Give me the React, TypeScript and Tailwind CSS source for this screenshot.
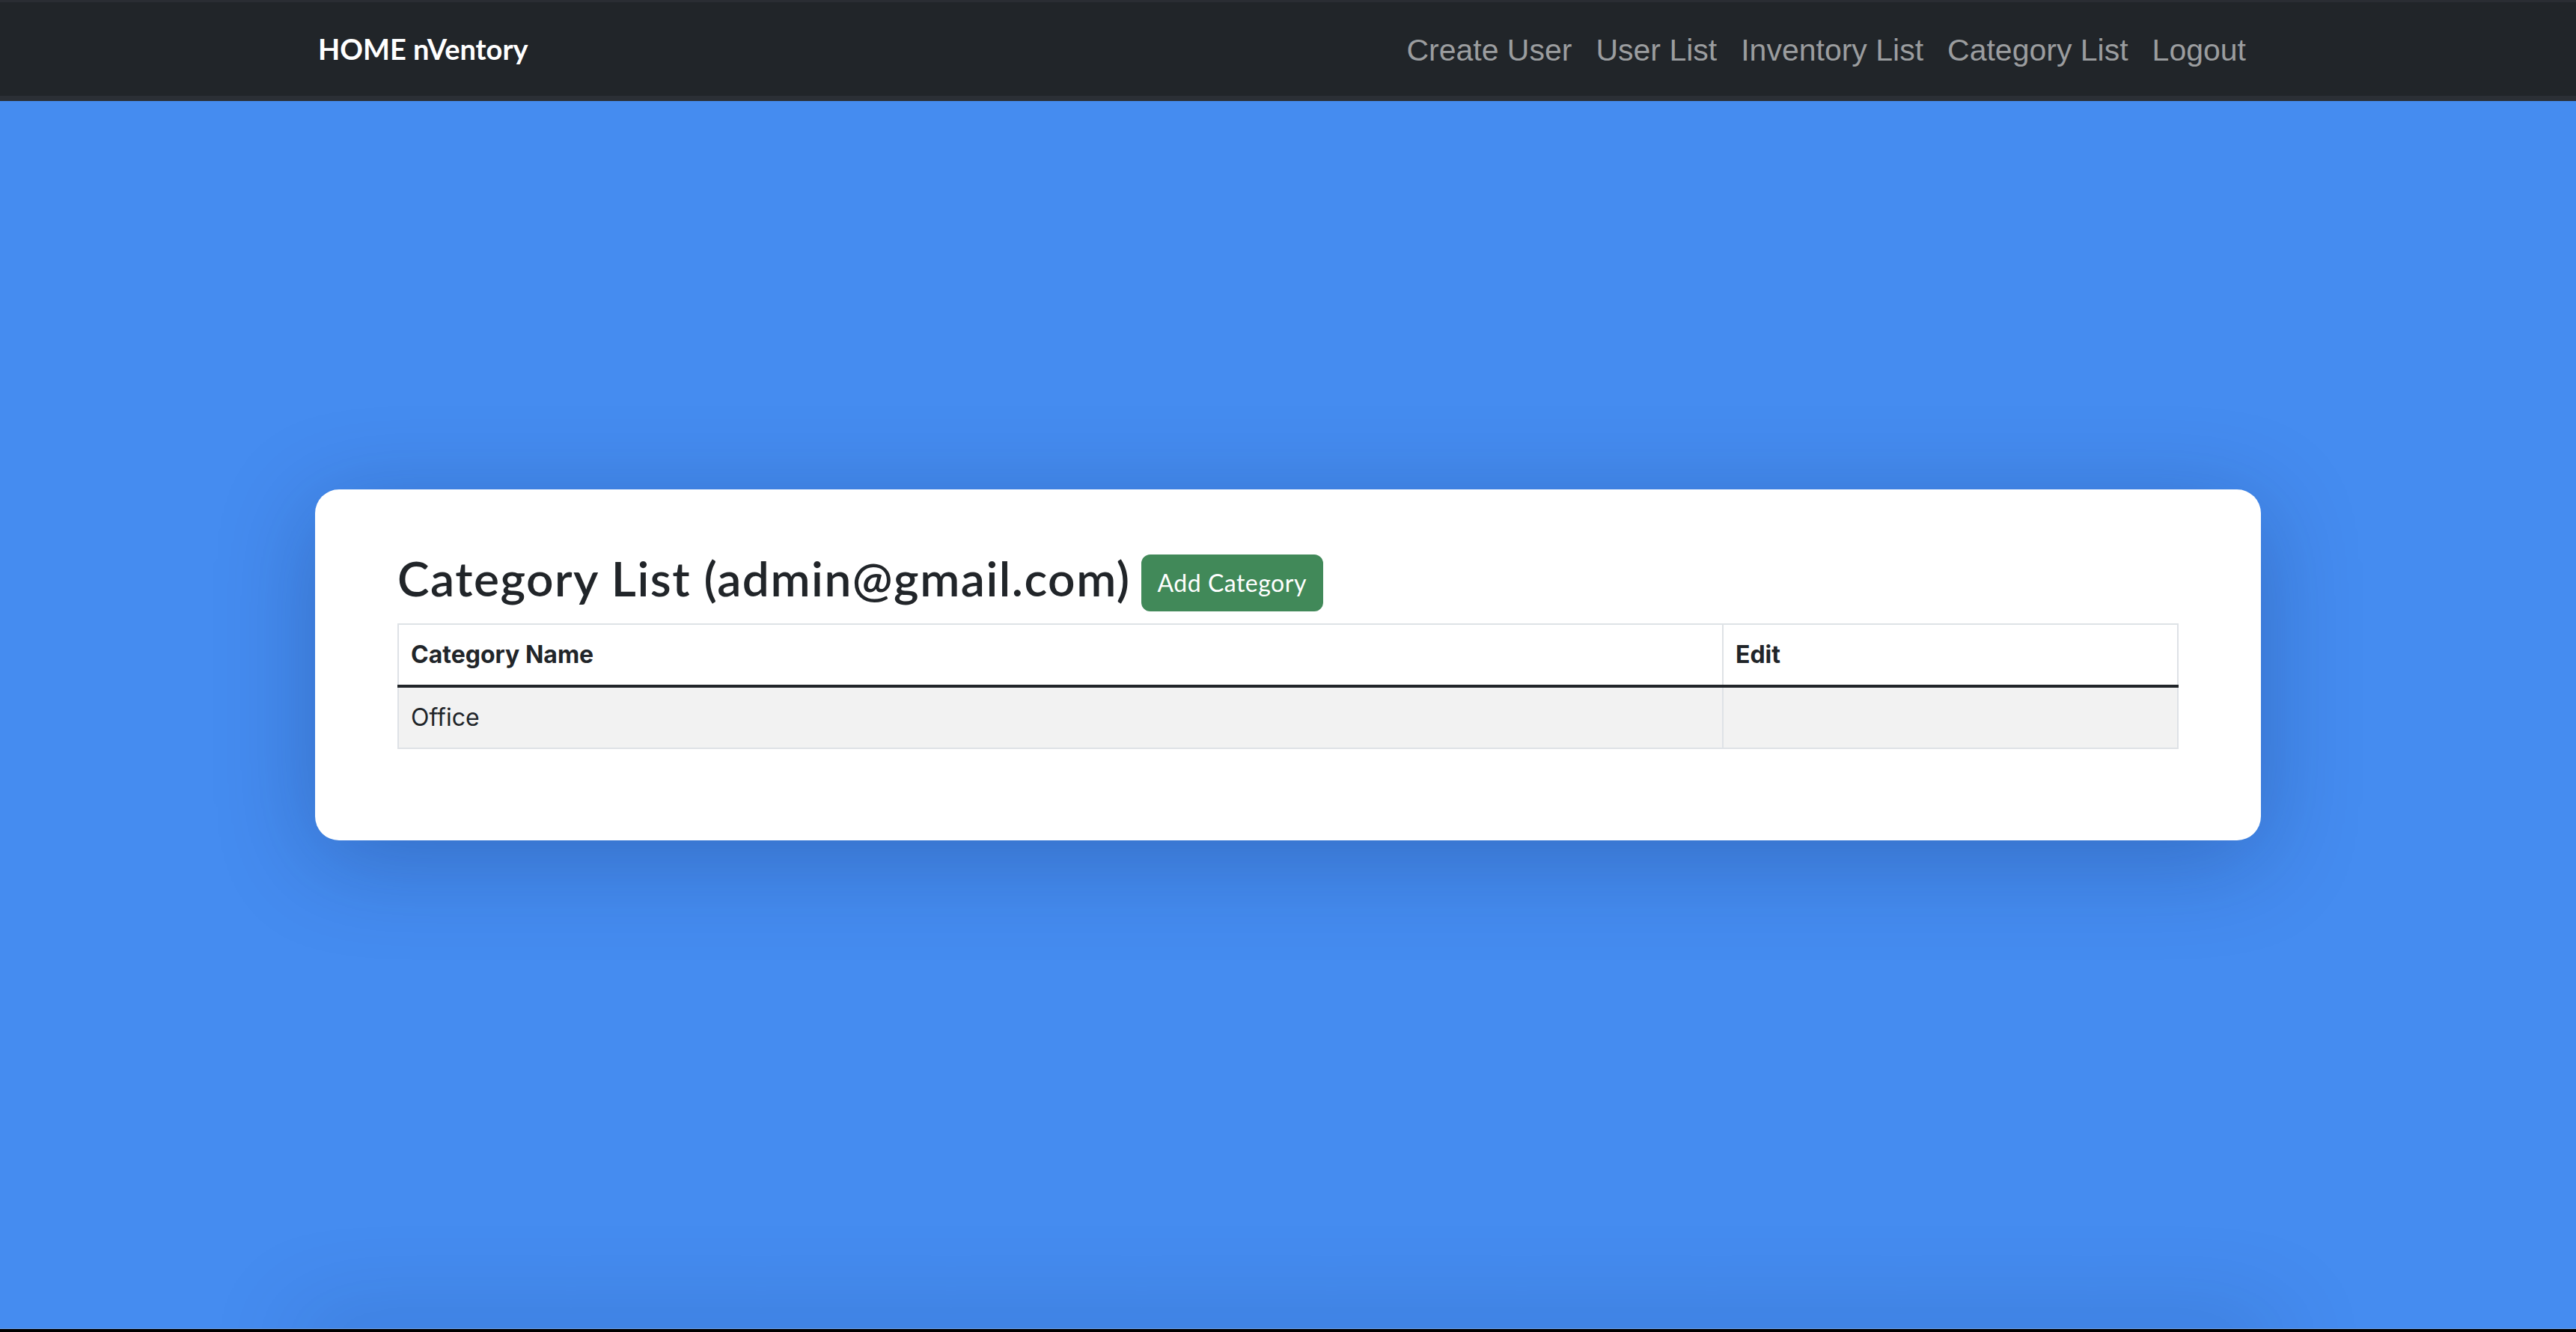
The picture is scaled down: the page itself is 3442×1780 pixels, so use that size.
import React from 'react'

const links = ['Create User', 'User List', 'Inventory List', 'Category List', 'Logout']

const rows = [{ name: 'Office' }]

export default function App() {
  return (
    <div className="h-[1780px] w-full overflow-hidden bg-black">
      {/* Navbar */}
      <nav className="h-[135px] border-t-[3px] border-b-[7px] border-t-[#2a2d33] border-b-[#2b2f35] bg-[#212529]">
        <div className="mx-auto flex h-full w-[2640px] items-center justify-between px-6">
          <a className="font-['Lato','Open_Sans',sans-serif] text-[38px] font-bold text-white">
            HOME nVentory
          </a>
          <ul className="flex items-center pt-[4px]">
            {links.map((l) => (
              <li key={l}>
                <a className="block px-4 font-['Liberation_Sans',Arial,sans-serif] text-[41px] text-[#9b9d9f]">
                  {l}
                </a>
              </li>
            ))}
          </ul>
        </div>
      </nav>

      {/* Main */}
      <main className="relative h-[1641px] overflow-hidden border-b border-b-[#6ea6f4] bg-[#458cf0] pt-[519px]">
        <div className="relative z-10 mx-auto w-[2600px] rounded-[32px] bg-white px-[110px] pt-[76px] pb-[122px] shadow-[0_24px_130px_rgba(10,30,80,0.28)]">
          <div className="flex items-center">
            <h2 className="font-['Lato','Open_Sans',sans-serif] text-[64px] leading-[1.2] font-semibold tracking-[1.5px] text-[#212529]">
              Category List (admin@gmail.com)
            </h2>
            <button className="mt-[11px] ml-[14px] rounded-[12px] border-2 border-[#418959] bg-[#418959] px-[20px] py-[12px] font-['Lato','Open_Sans',sans-serif] text-[32px] leading-[48px] tracking-[0.5px] text-white">
              Add Category
            </button>
          </div>

          <table className="mt-[16px] w-full border-collapse border-2 border-[#dee2e6] font-['Inter',sans-serif] text-[32px] text-[#212529]">
            <thead>
              <tr>
                <th className="w-[1770px] border-2 border-b-4 border-[#dee2e6] border-b-[#212529] px-4 py-4 text-left leading-[48px] font-bold">
                  Category Name
                </th>
                <th className="border-2 border-b-4 border-[#dee2e6] border-b-[#212529] px-4 py-4 text-left leading-[48px] font-bold">
                  Edit
                </th>
              </tr>
            </thead>
            <tbody>
              {rows.map((r) => (
                <tr key={r.name} className="bg-[#f2f2f2]">
                  <td className="border-2 border-[#dee2e6] px-4 py-4 leading-[48px]">{r.name}</td>
                  <td className="border-2 border-[#dee2e6] px-4 py-4 leading-[48px]"></td>
                </tr>
              ))}
            </tbody>
          </table>
        </div>

        <div className="absolute bottom-[-40px] left-[401px] h-[40px] w-[2640px] shadow-[0_0_130px_rgba(10,30,80,0.3)]" />
      </main>
    </div>
  )
}
